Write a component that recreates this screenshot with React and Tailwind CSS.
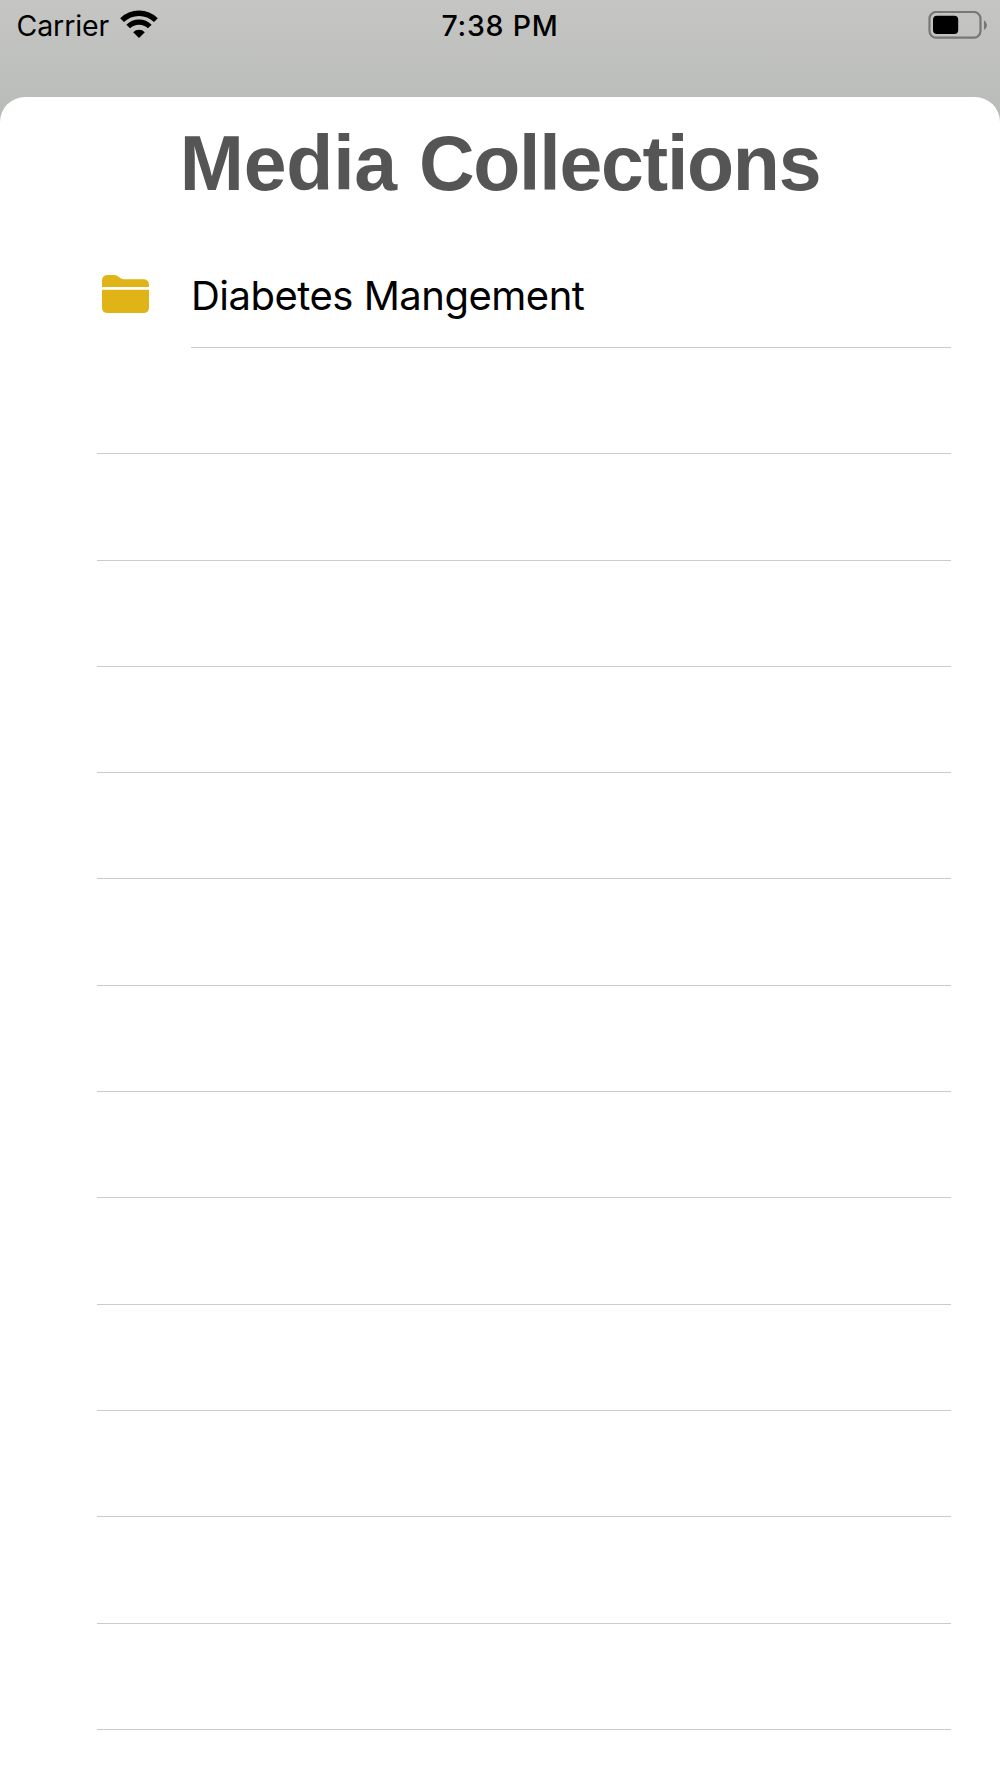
function StatusBar() {
  return (
    <header className="grid h-[50px] grid-cols-3 items-center text-[28.5px] leading-[50px] text-black">
      <div className="flex items-center pl-[16.5px]">
        <span className="pt-px tracking-[-0.1px]">Carrier</span>
        <svg className="mt-[-3px] ml-[10.7px] h-[28px] w-[38px]" viewBox="0 0 38 28" fill="none" stroke="#000">
          <path d="M2.1 10.2A24 24 0 0 1 35.9 10.2" strokeWidth="5.4" />
          <path d="M8.2 16.5A15.3 15.3 0 0 1 29.8 16.5" strokeWidth="5.2" />
          <path d="M19 28L13.2 22.2A8.3 8.3 0 0 1 24.8 22.2Z" fill="#000" stroke="none" />
        </svg>
      </div>
      <div className="pt-px text-center text-[28.5px] font-medium tracking-[0.75px]">7:38 PM</div>
      <svg className="mt-[-1px] mr-[12px] h-[28px] w-[60px] justify-self-end" viewBox="0 0 60 28">
        <rect x="1.5" y="1" width="51" height="25.6" rx="6.5" fill="none" stroke="#777876" strokeWidth="2.2" />
        <rect x="5" y="4.8" width="25.2" height="18.2" rx="4" fill="#000" />
        <path d="M56 9.2Q59 11 59 14T56 19Z" fill="#777876" />
      </svg>
    </header>
  );
}

function FolderIcon() {
  return (
    <svg className="h-[38px] w-[47px]" viewBox="0 0 47 38" fill="#e0b316">
      <path d="M0 12V5.5Q0 0 6 0H12Q15 0 17 2L18.5 3.2Q20 4.3 22 4.3H41Q47 4.3 47 10V12Z" />
      <path d="M0 14.7H47V32.5Q47 38 41 38H6Q0 38 0 32.5Z" />
    </svg>
  );
}

const emptyRows = Array.from({ length: 13 }, (_, i) => i);

export default function App() {
  return (
    <div className="flex h-[1778px] w-[1000px] flex-col overflow-hidden bg-linear-to-b from-[#c5c6c3] from-0% to-[#b9bbb8] to-[120px] font-['Inter',sans-serif]">
      <StatusBar />
      <main className="mt-[47px] flex-1 rounded-t-[25px] bg-white">
        <h1 className="flex justify-center gap-[22px] pt-[23px] font-['Liberation_Sans',sans-serif] text-[77px] leading-[86px] font-bold text-[#555]">
          <span className="tracking-[-0.2px]">Media</span> <span className="tracking-[-1.25px]">Collections</span>
        </h1>
        <ul className="mt-[35px] mr-[49px] ml-[97px]">
          <li className="flex h-[107px]">
            <div className="flex w-[94px] pt-[34px] pl-[5px]">
              <FolderIcon />
            </div>
            <div className="flex-1 border-b border-[#cbcbcc] pt-[30px] text-[40px] leading-[50px] tracking-[-0.5px] whitespace-nowrap text-black">
              Diabetes Mangement
            </div>
          </li>
          {emptyRows.map((i) => (
            <li key={i} className="h-[106.3px] border-b border-[#cbcbcc]" />
          ))}
        </ul>
      </main>
    </div>
  );
}
